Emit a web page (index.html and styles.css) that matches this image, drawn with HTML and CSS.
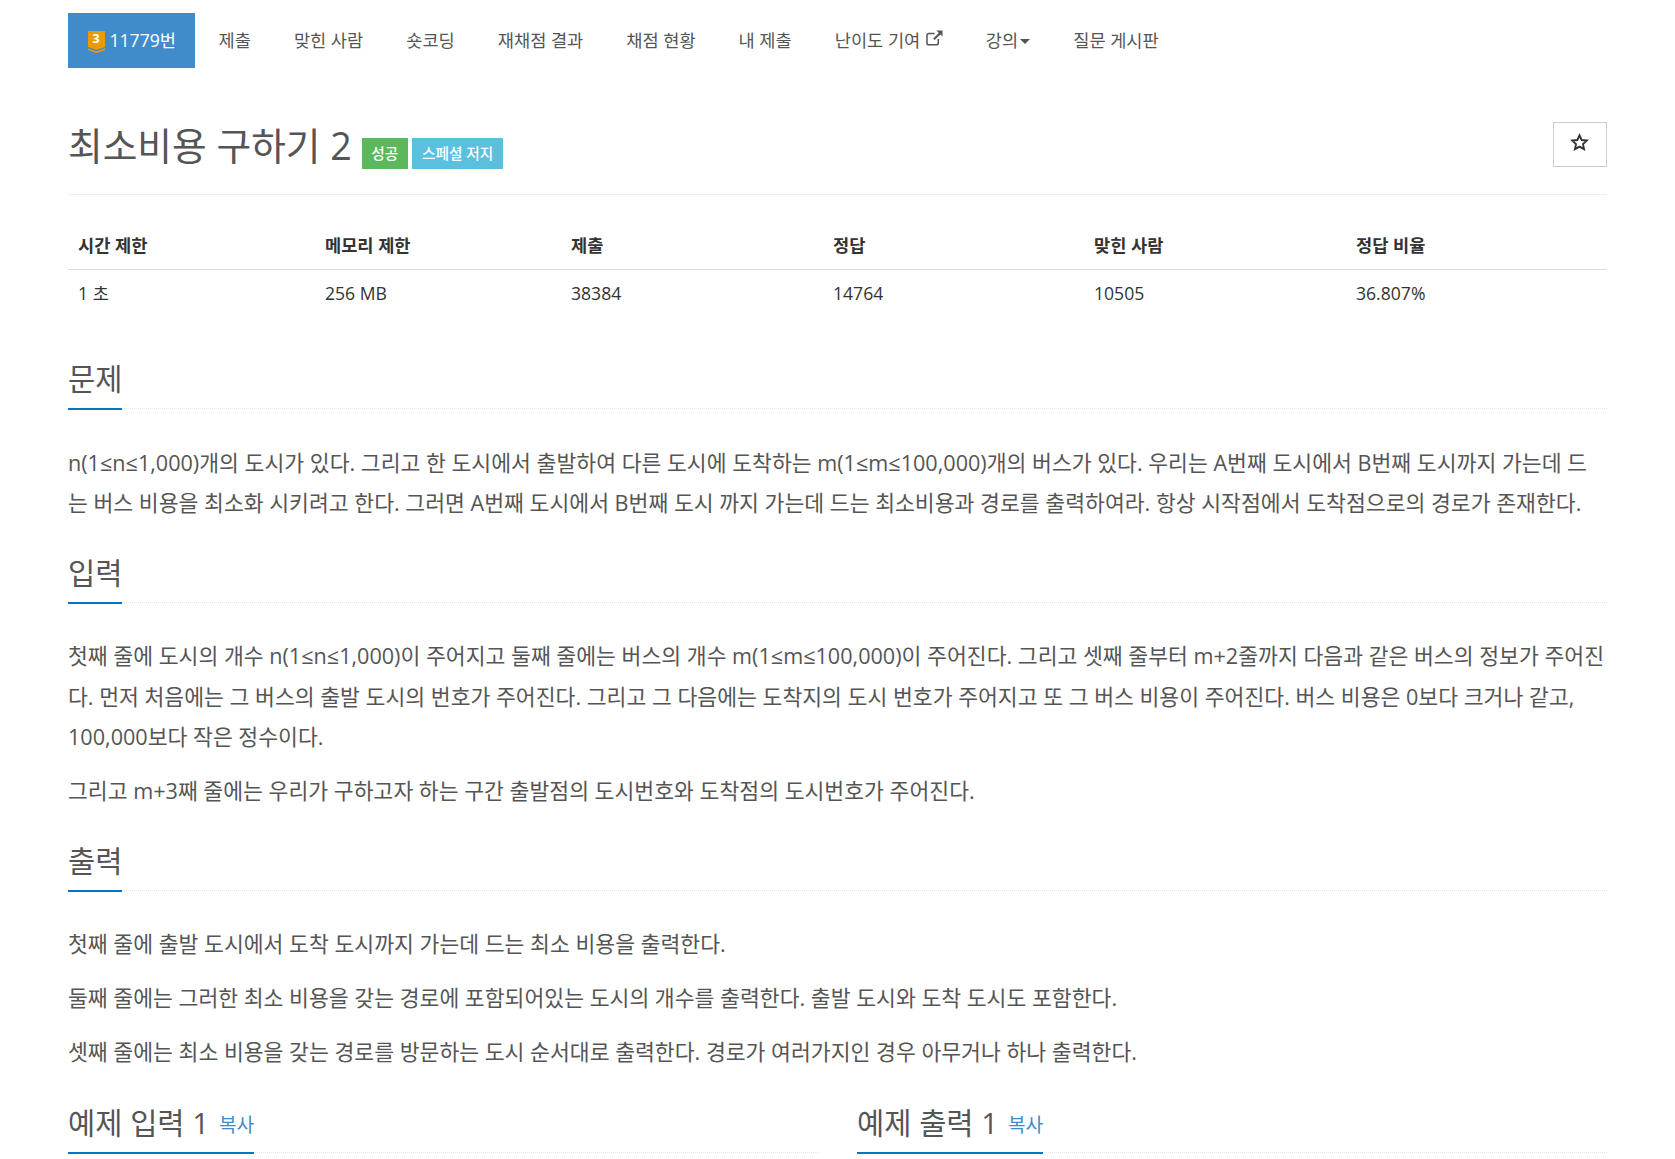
FILE: index.html
```html
<!DOCTYPE html>
<html lang="ko">
<head>
<meta charset="utf-8">
<title>11779번: 최소비용 구하기 2</title>
<link rel="stylesheet" href="styles.css">
</head>
<body>
<div class="container">
  <nav class="tabs">
    <a class="tab active"><svg class="tier" viewBox="0 0 17 22" width="17" height="22"><path fill="#ec9a00" d="M0 0h17v16l-8.500 3-8.500-3z"/><path fill="none" stroke="#ec9a00" stroke-width="1.500" d="M0 18.300l8.500 3 8.500-3"/></svg><span class="tier-num">3</span>11779번</a>
    <a class="tab">제출</a>
    <a class="tab">맞힌 사람</a>
    <a class="tab">숏코딩</a>
    <a class="tab">재채점 결과</a>
    <a class="tab">채점 현황</a>
    <a class="tab">내 제출</a>
    <a class="tab">난이도 기여 <svg class="ext" viewBox="0 0 18 17" width="17" height="16"><path fill="none" stroke="#555" stroke-width="1.6" d="M13 9.5v4.2a2 2 0 0 1-2 2H3a2 2 0 0 1-2-2V5.8a2 2 0 0 1 2-2h6"/><path fill="#555" d="M11 .5h6.500V7l-2.300-2.300-6 6-1.600-1.600 6-6z"/></svg></a>
    <a class="tab">강의<span class="caret"></span></a>
    <a class="tab">질문 게시판</a>
  </nav>

  <header class="page-header">
    <h1 class="title">최소비용 구하기 2</h1>
    <span class="label green">성공</span>
    <span class="label blue">스페셜 저지</span>
    <button class="star-btn"><svg viewBox="0 0 20 19" width="19" height="18"><path fill="none" stroke="#333" stroke-width="2" d="M10 2.400l2.300 5 5.400.6-4 3.700 1.100 5.400-4.800-2.700-4.800 2.700 1.100-5.400-4-3.700 5.400-.6z"/></svg></button>
  </header>

  <table class="stats">
    <thead>
      <tr><th class="c1">시간 제한</th><th class="c2">메모리 제한</th><th class="c3">제출</th><th class="c4">정답</th><th class="c5">맞힌 사람</th><th class="c6">정답 비율</th></tr>
    </thead>
    <tbody>
      <tr><td>1 초</td><td>256 MB</td><td>38384</td><td>14764</td><td>10505</td><td>36.807%</td></tr>
    </tbody>
  </table>

  <section class="sec first">
    <div class="headline"><h2>문제</h2></div>
    <p class="lh">n(1≤n≤1,000)개의 도시가 있다. 그리고 한 도시에서 출발하여 다른 도시에 도착하는 m(1≤m≤100,000)개의 버스가 있다. 우리는 A번째 도시에서 B번째 도시까지 가는데 드는 버스 비용을 최소화 시키려고 한다. 그러면 A번째 도시에서 B번째 도시 까지 가는데 드는 최소비용과 경로를 출력하여라. 항상 시작점에서 도착점으로의 경로가 존재한다.</p>
  </section>

  <section class="sec">
    <div class="headline"><h2>입력</h2></div>
    <p class="lh">첫째 줄에 도시의 개수 n(1≤n≤1,000)이 주어지고 둘째 줄에는 버스의 개수 m(1≤m≤100,000)이 주어진다. 그리고 셋째 줄부터 m+2줄까지 다음과 같은 버스의 정보가 주어진다. 먼저 처음에는 그 버스의 출발 도시의 번호가 주어진다. 그리고 그 다음에는 도착지의 도시 번호가 주어지고 또 그 버스 비용이 주어진다. 버스 비용은 0보다 크거나 같고, 100,000보다 작은 정수이다.</p>
    <p class="lh">그리고 m+3째 줄에는 우리가 구하고자 하는 구간 출발점의 도시번호와 도착점의 도시번호가 주어진다.</p>
  </section>

  <section class="sec">
    <div class="headline"><h2>출력</h2></div>
    <p class="lh">첫째 줄에 출발 도시에서 도착 도시까지 가는데 드는 최소 비용을 출력한다.</p>
    <p class="lh">둘째 줄에는 그러한 최소 비용을 갖는 경로에 포함되어있는 도시의 개수를 출력한다. 출발 도시와 도착 도시도 포함한다.</p>
    <p class="lh">셋째 줄에는 최소 비용을 갖는 경로를 방문하는 도시 순서대로 출력한다. 경로가 여러가지인 경우 아무거나 하나 출력한다.</p>
  </section>

  <div class="samples">
    <div class="headline"><h2>예제 입력 1 <a class="copy">복사</a></h2></div>
    <div class="headline"><h2>예제 출력 1 <a class="copy">복사</a></h2></div>
  </div>
</div>
</body>
</html>
```
FILE: styles.css
```css
* { box-sizing: border-box; }
html, body { margin: 0; padding: 0; }
body {
  height: 1159px;
  overflow: hidden;
  background: #fff;
  color: #555;
  font-family: "Open Sans", "Noto Sans CJK KR", sans-serif;
  font-size: 14px;
}
.container { margin: 0 68px; }

.tabs { display: flex; padding-top: 13px; height: 68px; }
.tab {
  position: relative;
  display: flex;
  align-items: center;
  height: 55px;
  padding: 0 21.500px 3px;
  font-size: 17.600px;
  color: #555;
  white-space: pre;
}
.tab.active { background: #428bca; color: #fff; padding: 0 19px 3px 19.500px; margin-right: 2px; }
.tier { margin: 5px 5px 0 0; }
.tier-num {
  position: absolute;
  left: 19.500px;
  width: 17px;
  top: 16px;
  text-align: center;
  font-size: 13px;
  font-weight: 700;
  color: #fff;
}
.ext { margin-left: 1px; margin-bottom: 3px; }
.caret {
  width: 0; height: 0;
  margin: 4px 0 0 2px;
  border-top: 5px solid #555;
  border-left: 5px solid transparent;
  border-right: 5px solid transparent;
}

.page-header {
  position: relative;
  display: flex;
  align-items: flex-start;
  height: 127px;
  border-bottom: 1px solid #eee;
}
.title {
  margin: 54px 0 0;
  font-size: 37.700px;
  font-weight: 400;
  line-height: 48px;
  color: #555;
}
.label {
  margin-top: 70px;
  height: 31px;
  line-height: 31px;
  padding: 0 9.500px;
  color: #fff;
  font-size: 14.700px;
  font-weight: 500;
}
.label.green { background: #5cb85c; margin-left: 10px; }
.label.blue { background: #5bc0de; margin-left: 4px; padding: 0 10px; }
.star-btn {
  position: absolute;
  right: 0;
  top: 54px;
  display: flex;
  align-items: center;
  justify-content: center;
  width: 54px;
  height: 45px;
  padding: 0 2px 6px 0;
  background: #fff;
  border: 1px solid #ccc;
}

.stats { width: 100%; border-collapse: collapse; margin-top: 29px; table-layout: fixed; font-size: 17.600px; color: #333; }
.stats th, .stats td { text-align: left; padding: 0 10px; }
.stats th { height: 45px; padding-bottom: 4px; font-weight: 700; border-bottom: 1px solid #ddd; color: #333; }
.stats td { height: 49px; padding-bottom: 2px; }
.c1 { width: 247px; }
.c2 { width: 246px; }
.c3 { width: 262px; }
.c4 { width: 261px; }
.c5 { width: 262px; }

.sec { margin-top: 26px; }
.sec.first { margin-top: 38px; }
.headline {
  border-bottom: 1px dotted #e5e5e5;
  height: 53px;
  margin-bottom: 33.500px;
}
.headline h2 {
  display: inline-block;
  margin: 0;
  height: 54px;
  padding-top: 3px;
  font-size: 29.600px;
  font-weight: 400;
  line-height: 40px;
  color: #555;
  border-bottom: 2px solid #0076c0;
  min-width: 54px;
}
.lh {
  margin: 0 0 13.500px;
  padding-right: 3px;
  font-size: 21.600px;
  line-height: 40.500px;
  color: #555;
}
.samples { display: grid; grid-template-columns: 750px 750px; column-gap: 39px; margin-top: 27.500px; }
.copy { font-size: 19.200px; color: #428bca; margin-left: 2px; vertical-align: 2px; }
```
